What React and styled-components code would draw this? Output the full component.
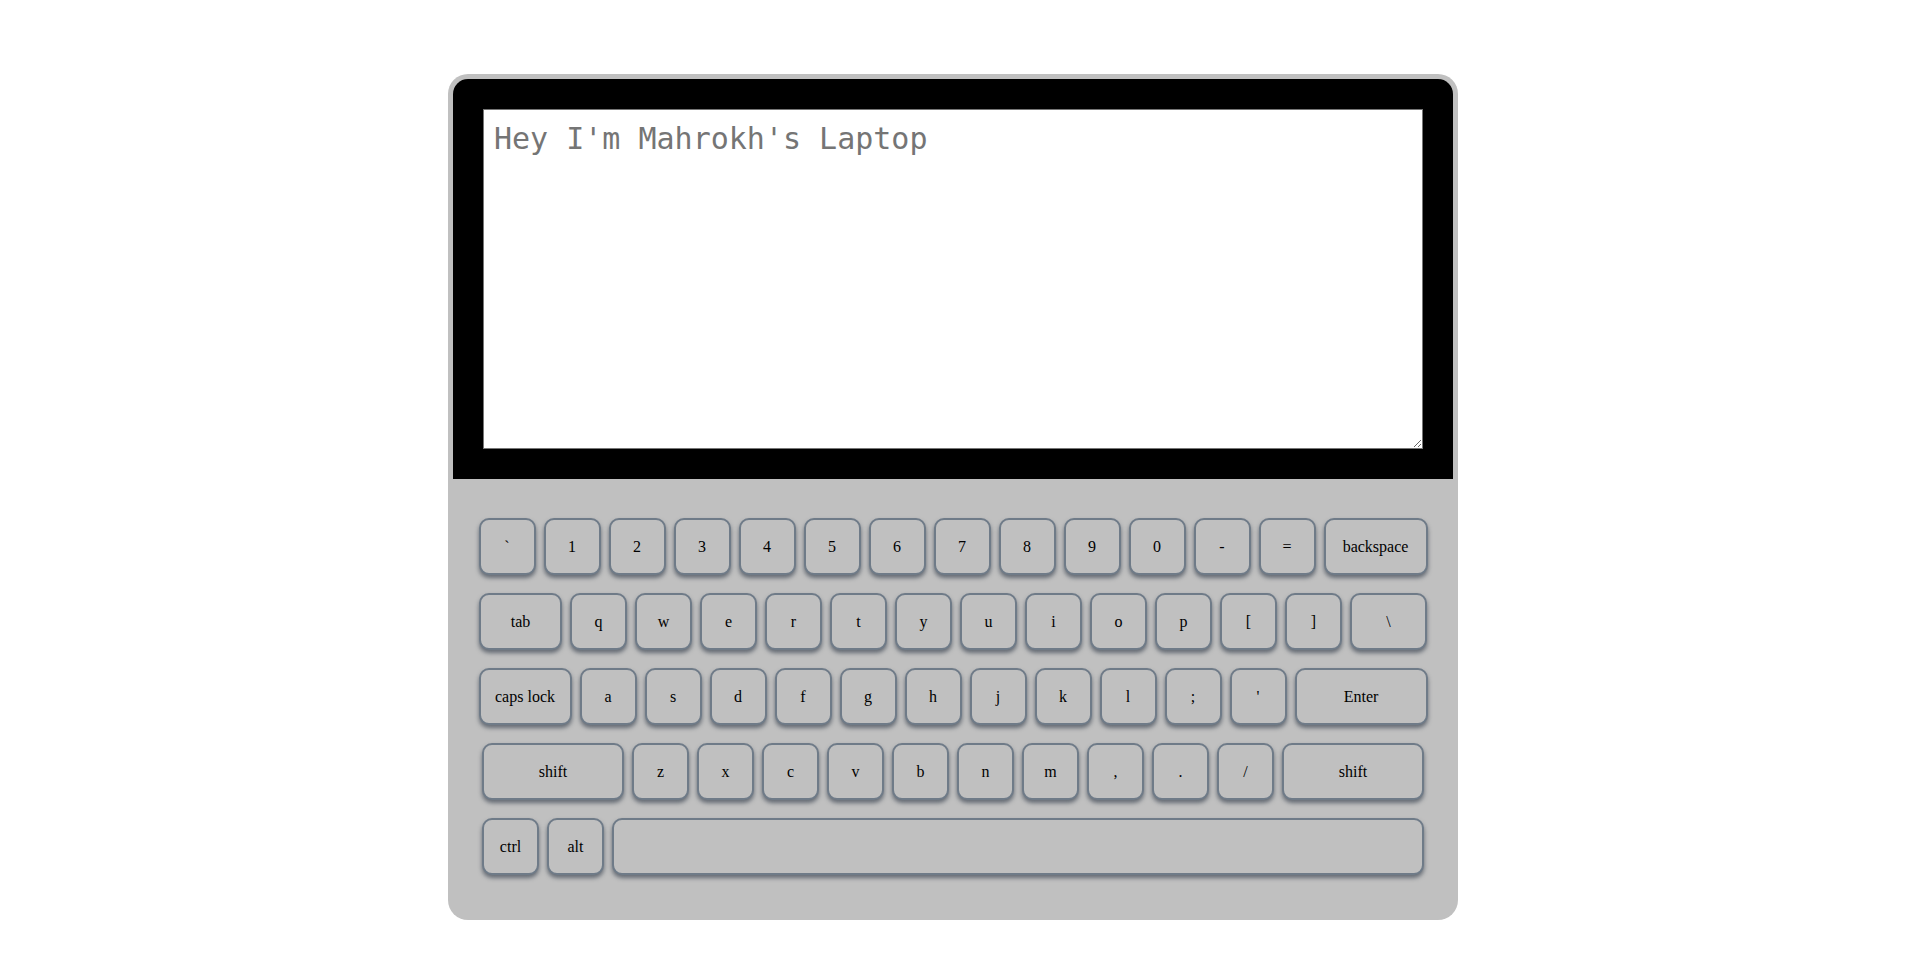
import React from "react";
import styled, { createGlobalStyle } from "styled-components";

const GlobalStyle = createGlobalStyle`
  body {
    margin: 0;
    background: #ffffff;
  }
`;

const Page = styled.div`
  display: flex;
  justify-content: center;
  padding-top: 74px;
  padding-bottom: 59px;
`;

const Laptop = styled.div`
  width: 1010px;
  background-color: #c0c0c0;
  border-radius: 20px;
  padding: 5px 5px 0;
  box-sizing: border-box;
`;

const Screen = styled.div`
  height: 400px;
  background-color: #000;
  border-radius: 15px 15px 0 0;
  padding: 30px;
  box-sizing: border-box;
`;

const Display = styled.textarea`
  display: block;
  width: 940px;
  height: 340px;
  box-sizing: border-box;
  margin: 0;
  padding: 11px 10px;
  border: 1px solid #767676;
  background: #fff;
  font-family: "DejaVu Sans Mono", monospace;
  font-size: 30px;
  color: #333;
  &::placeholder {
    color: #757575;
  }
`;

const Keyboard = styled.div`
  display: flex;
  flex-direction: column;
  gap: 18px;
  padding: 39px 0 45px;
`;

const Row = styled.div`
  display: flex;
  justify-content: center;
  gap: 8px;
`;

const Key = styled.button`
  width: ${(p) => p.$w || 57}px;
  height: 57px;
  box-sizing: border-box;
  padding: 0;
  background-color: #c0c0c0;
  border: 2px solid #6f7b88;
  border-radius: 10px;
  box-shadow: 0 3px 4px rgba(40, 50, 65, 0.6);
  font-family: "Liberation Serif", serif;
  font-size: 16px;
  color: #000;
  display: flex;
  align-items: center;
  justify-content: center;
`;

const rows = [
  [["`"], ["1"], ["2"], ["3"], ["4"], ["5"], ["6"], ["7"], ["8"], ["9"], ["0"], ["-"], ["="], ["backspace", 104]],
  [["tab", 83], ["q"], ["w"], ["e"], ["r"], ["t"], ["y"], ["u"], ["i"], ["o"], ["p"], ["["], ["]"], ["\\", 77]],
  [["caps lock", 93], ["a"], ["s"], ["d"], ["f"], ["g"], ["h"], ["j"], ["k"], ["l"], [";"], ["'"], ["Enter", 133]],
  [["shift", 142], ["z"], ["x"], ["c"], ["v"], ["b"], ["n"], ["m"], [","], ["."], ["/"], ["shift", 142]],
  [["ctrl"], ["alt"], ["", 812]],
];

const App = () => {
  return (
    <>
      <GlobalStyle />
      <Page>
        <Laptop>
          <Screen>
            <Display placeholder="Hey I'm Mahrokh's Laptop" />
          </Screen>
          <Keyboard>
            {rows.map((row, i) => (
              <Row key={i}>
                {row.map(([label, w], j) => (
                  <Key key={j} $w={w}>
                    {label}
                  </Key>
                ))}
              </Row>
            ))}
          </Keyboard>
        </Laptop>
      </Page>
    </>
  );
};

export default App;
